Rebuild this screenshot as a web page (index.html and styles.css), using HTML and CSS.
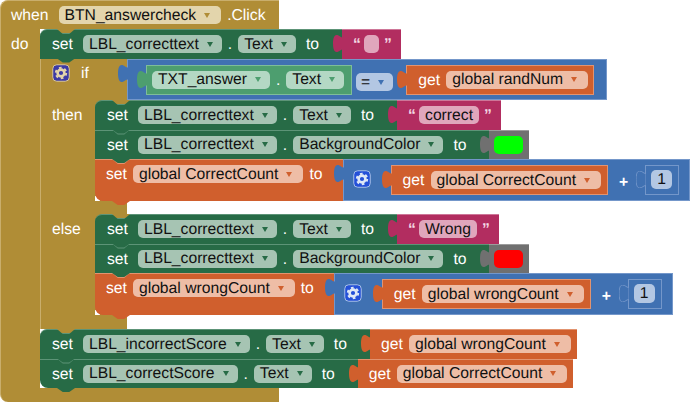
FILE: index.html
```html
<!DOCTYPE html>
<html lang="en">
<head>
<meta charset="utf-8">
<title>Blocks</title>
<link rel="stylesheet" href="styles.css">
</head>
<body>
<svg class="defs" width="0" height="0">
  <symbol id="tabshape" viewBox="0 0 10 17"><path d="M10 2.5C7 2.5 6.5 0 3.5 0 1 0 0 4 0 8.5S1 17 3.5 17C6.5 17 7 14.5 10 14.5Z"/></symbol>
  <symbol id="gear" viewBox="0 0 18 18">
    <rect x="0.75" y="0.75" width="16.5" height="16.5" rx="4" class="gear-bg"/>
    <circle cx="9" cy="9" r="3.4" class="gear-ring"/>
    <circle cx="9" cy="9" r="5.2" class="gear-teeth"/>
  </symbol>
</svg>
<main class="event gold">
  <div class="head">
    <span class="kw">when</span>
    <span class="field"><span>BTN_answercheck</span><i class="caret"></i></span>
    <span class="click">.Click</span>
  </div>
  <div class="body">
    <div class="do"><span class="lbl">do</span></div>
    <div class="stack">
      <div class="stmt green top">
        <div class="seg"><span class="kw">set</span><span class="field"><span>LBL_correcttext</span><i class="caret"></i></span><span class="dot">.</span><span class="field"><span>Text</span><i class="caret"></i></span><span class="kw">to</span></div>
        <div class="val pink"><svg class="tab"><use href="#tabshape"/></svg><span class="q">“</span><span class="field blank"></span><span class="q">”</span></div>
      </div>
      <div class="ifblock gold">
        <div class="ifrow">
          <div class="iflabel"><svg class="gear-icon mut"><use href="#gear"/></svg><span class="lbl">if</span></div>
          <div class="val blue boxed test">
            <svg class="tab"><use href="#tabshape"/></svg>
            <div class="val mint boxed inner"><svg class="tab"><use href="#tabshape"/></svg><span class="field"><span>TXT_answer</span><i class="caret"></i></span><span class="dot">.</span><span class="field"><span>Text</span><i class="caret"></i></span></div>
            <span class="field eq"><span>=</span><i class="caret"></i></span>
            <div class="val orange boxed get"><svg class="tab"><use href="#tabshape"/></svg><span class="getkw">get</span><span class="field"><span>global randNum</span><i class="caret"></i></span></div>
          </div>
        </div>
        <div class="clause">
          <div class="lblcol"><span class="lbl">then</span></div>
          <div class="stack">
            <div class="stmt green top">
              <div class="seg"><span class="kw">set</span><span class="field"><span>LBL_correcttext</span><i class="caret"></i></span><span class="dot">.</span><span class="field"><span>Text</span><i class="caret"></i></span><span class="kw">to</span></div>
              <div class="val pink"><svg class="tab"><use href="#tabshape"/></svg><span class="q">“</span><span class="field"><span>correct</span></span><span class="q">”</span></div>
            </div>
            <div class="stmt green">
              <div class="seg"><span class="kw">set</span><span class="field"><span>LBL_correcttext</span><i class="caret"></i></span><span class="dot">.</span><span class="field"><span>BackgroundColor</span><i class="caret"></i></span><span class="kw">to</span></div>
              <div class="val grey"><svg class="tab"><use href="#tabshape"/></svg><span class="swatch lime"></span></div>
            </div>
            <div class="stmt orange tall last">
              <div class="seg oseg"><span class="setkw">set</span><span class="field"><span>global CorrectCount</span><i class="caret"></i></span><span class="tokw">to</span></div>
              <div class="val blue boxed sum">
                <svg class="tab"><use href="#tabshape"/></svg>
                <svg class="gear-icon mub"><use href="#gear"/></svg>
                <div class="val orange boxed get"><svg class="tab"><use href="#tabshape"/></svg><span class="getkw">get</span><span class="field"><span>global CorrectCount</span><i class="caret"></i></span></div>
                <span class="plus">+</span>
                <div class="val blue boxed num"><svg class="tab outline"><use href="#tabshape"/></svg><span class="field"><span>1</span></span></div>
              </div>
            </div>
          </div>
        </div>
        <div class="arm arm-then"></div>
        <div class="clause">
          <div class="lblcol"><span class="lbl">else</span></div>
          <div class="stack">
            <div class="stmt green top">
              <div class="seg"><span class="kw">set</span><span class="field"><span>LBL_correcttext</span><i class="caret"></i></span><span class="dot">.</span><span class="field"><span>Text</span><i class="caret"></i></span><span class="kw">to</span></div>
              <div class="val pink"><svg class="tab"><use href="#tabshape"/></svg><span class="q">“</span><span class="field"><span>Wrong</span></span><span class="q">”</span></div>
            </div>
            <div class="stmt green">
              <div class="seg"><span class="kw">set</span><span class="field"><span>LBL_correcttext</span><i class="caret"></i></span><span class="dot">.</span><span class="field"><span>BackgroundColor</span><i class="caret"></i></span><span class="kw">to</span></div>
              <div class="val grey"><svg class="tab"><use href="#tabshape"/></svg><span class="swatch red"></span></div>
            </div>
            <div class="stmt orange tall last">
              <div class="seg oseg"><span class="setkw">set</span><span class="field"><span>global wrongCount</span><i class="caret"></i></span><span class="tokw">to</span></div>
              <div class="val blue boxed sum">
                <svg class="tab"><use href="#tabshape"/></svg>
                <svg class="gear-icon mub"><use href="#gear"/></svg>
                <div class="val orange boxed get"><svg class="tab"><use href="#tabshape"/></svg><span class="getkw">get</span><span class="field"><span>global wrongCount</span><i class="caret"></i></span></div>
                <span class="plus">+</span>
                <div class="val blue boxed num"><svg class="tab outline"><use href="#tabshape"/></svg><span class="field"><span>1</span></span></div>
              </div>
            </div>
          </div>
        </div>
        <div class="arm arm-else"></div>
      </div>
      <div class="stmt green top">
        <div class="seg"><span class="kw">set</span><span class="field"><span>LBL_incorrectScore</span><i class="caret"></i></span><span class="dot">.</span><span class="field"><span>Text</span><i class="caret"></i></span><span class="kw">to</span></div>
        <div class="val orange get2"><svg class="tab"><use href="#tabshape"/></svg><span class="getkw">get</span><span class="field"><span>global wrongCount</span><i class="caret"></i></span></div>
      </div>
      <div class="stmt green last">
        <div class="seg"><span class="kw">set</span><span class="field"><span>LBL_correctScore</span><i class="caret"></i></span><span class="dot">.</span><span class="field"><span>Text</span><i class="caret"></i></span><span class="kw">to</span></div>
        <div class="val orange get2"><svg class="tab"><use href="#tabshape"/></svg><span class="getkw">get</span><span class="field"><span>global CorrectCount</span><i class="caret"></i></span></div>
      </div>
    </div>
  </div>
  <div class="foot"></div>
</main>
</body>
</html>
```

FILE: styles.css
```css
* { box-sizing: border-box; }
html, body { margin: 0; padding: 0; background: #fff; }
body { width: 690px; height: 402px; overflow: hidden; font: 15.7px/19px "Liberation Sans", Arial, sans-serif; text-rendering: geometricPrecision; color: #fff; }
.defs { position: absolute; }

.gold   { --c: #b08d36; --e: #c9ae6c; --f: #e3d5ac; }
.green  { --c: #276b46; --e: #5d9477; --f: #a6c4b3; }
.mint   { --c: #4d9e6f; --e: #7ebd98; --f: #b4d8c4; }
.pink   { --c: #b22d60; --e: #ce7698; --f: #e0a6bc; }
.blue   { --c: #4071b2; --e: #7497ca; --f: #b3c7e3; }
.orange { --c: #d05f2d; --e: #e2936f; --f: #eebda6; }
.grey   { --c: #707070; --e: #9c9c9c; --f: #aaa; }

.event { width: 279px; height: 402px; display: flex; flex-direction: column; }
.head { height: 29px; flex: none; display: flex; align-items: flex-start; padding: 5px 0 0 10px; background: var(--c); border-left: 1px solid var(--e); border-top: 1px solid var(--e); border-top-left-radius: 8px; }
.head .kw { padding: 0; margin-right: 10px; }
.head .field:has(.caret) { padding-right: 11px; }
.click { margin-left: 6px; }
.body { display: flex; flex: none; }
.do { width: 40px; flex: none; background: var(--c); border-left: 1px solid var(--e); padding: 6px 0 0 10px; }
.foot { height: 14px; flex: none; background: var(--c); border-left: 1px solid var(--e); border-bottom-left-radius: 8px; }

.stack { flex: none; width: max-content; display: flex; flex-direction: column; background: linear-gradient(#fff, #fff) left bottom / 5px 5px no-repeat; }

.stmt { position: relative; display: flex; align-items: stretch; width: max-content; height: 29.5px; background: var(--c); border-top: 1px solid var(--e); border-top-left-radius: 7px; }
.stmt.tall { height: 42px; }
.stmt.last { border-bottom-left-radius: 8px; }
.stmt:not(.top) { border-top-left-radius: 0; }
.stmt::before { content: ""; position: absolute; z-index: 2; left: 17px; top: -1px; width: 18px; height: 5px; background: linear-gradient(var(--notch, var(--e)) 4px, var(--e) 4px); clip-path: polygon(0 0, 100% 0, 68% 100%, 32% 100%); }
.stmt::after { content: ""; position: absolute; z-index: 3; left: 17px; bottom: -4px; width: 18px; height: 4px; background: var(--c); clip-path: polygon(0 0, 100% 0, 68% 100%, 32% 100%); }
.stmt.top { --notch: #b08d36; }

.seg { display: flex; align-items: flex-start; gap: 6px; padding: 5px 8px 0 8px; }
.kw { padding: 0 4px; }
.oseg { gap: 6px; padding: 5px 12px 0 11px; }
.setkw, .tokw { display: block; }

.field { display: inline-flex; align-items: center; height: 18px; flex: none; padding: 0 6px; background: var(--f); border-radius: 5px; color: #111; }
.field:has(.caret) { padding-right: 9px; }
.orange .field:has(.caret) { padding-right: 11px; }
.caret { width: 0; height: 0; margin-left: 8px; border-left: 3px solid transparent; border-right: 3px solid transparent; border-top: 5px solid var(--c); }
.field.blank { width: 15px; }

.val { position: relative; flex: none; display: flex; align-items: flex-start; background: var(--c); border-top: 1px solid var(--e); margin-top: -1px; }
.val.boxed { border: 1px solid var(--e); }
.tab { position: absolute; left: -9px; top: 5px; width: 10px; height: 17px; fill: var(--c); overflow: visible; }
.boxed > .tab { left: -10px; }
.tab.outline { stroke: var(--e); stroke-width: 1px; }

.stmt > .val { margin-left: 9px; }
.stmt > .seg { padding-right: 10px; }
.stmt > .seg.oseg { padding-right: 10px; }
.stmt.orange > .val { margin-left: 10px; }

.pink { padding: 5px 11px 0; gap: 5px; }
.q { width: 6px; font-weight: 700; color: #f4dbe5; }
.grey { padding: 5px 6px 0 5px; }
.swatch { display: block; width: 29px; height: 18px; border-radius: 5px; }
.lime { background: #0f0; }
.red { background: #f00; }

.get { margin: 0; padding: 5px 6px 0 11px; height: 30px; gap: 4px; }
.get2 { padding: 5px 6px 0 11px; gap: 4px; }
.getkw { width: 24px; }
.dot { flex: none; }

.ifblock { width: 87px; background: var(--c); border-left: 1px solid var(--e); flex: none; }
.ifrow { display: flex; height: 41.5px; }
.iflabel { flex: none; width: 86px; display: flex; align-items: flex-start; gap: 11px; padding: 5px 0 0 11px; }
.gear-icon { flex: none; width: 18px; height: 18px; }
.gear-ring { fill: none; stroke-width: 2.6; }
.gear-teeth { fill: none; stroke-width: 2; stroke-dasharray: 2.7 2.75; }
.mut { fill: #3b3aa6; stroke: #d8c797; --g: #e3d5ac; }
.mub { fill: #2450d8; stroke: #a6bfe6; --g: #dfe8f6; }
.gear-bg { stroke-width: 1; }
.gear-ring, .gear-teeth { stroke: var(--g); }

.test { margin-top: 0; padding: 5px 11px 0 18px; gap: 5px; width: 480px; }
.test .get { padding-right: 5px; }
.inner { margin: 0; height: 30px; padding: 5px 7px 0 5px; gap: 6px; }
.eq { align-self: center; margin-top: 1px; padding: 0 9px 0 5px; margin-left: -1px; }
.eq.field { --c: #4071b2; }
.eq + .val { margin-left: 8px; }

.clause { display: flex; }
.lblcol { width: 54px; flex: none; padding: 6px 0 0 11px; }
.arm-then { height: 13px; }
.arm-else { height: 14px; }

.sum { margin-left: 10px; padding: 5px 10px 0 9px; }
.sum > .gear-icon { margin: 5px 0 0 0; }
.sum > .get { margin-left: 20px; }
.plus { align-self: center; margin: 0 0 0 11px; font-weight: 700; width: 12px; }
.num { margin: 0 0 0 14px; height: 30px; padding: 4px 6px 0 5px; }
.num .field { height: 19px; width: 21px; padding: 0; justify-content: center; }
```
